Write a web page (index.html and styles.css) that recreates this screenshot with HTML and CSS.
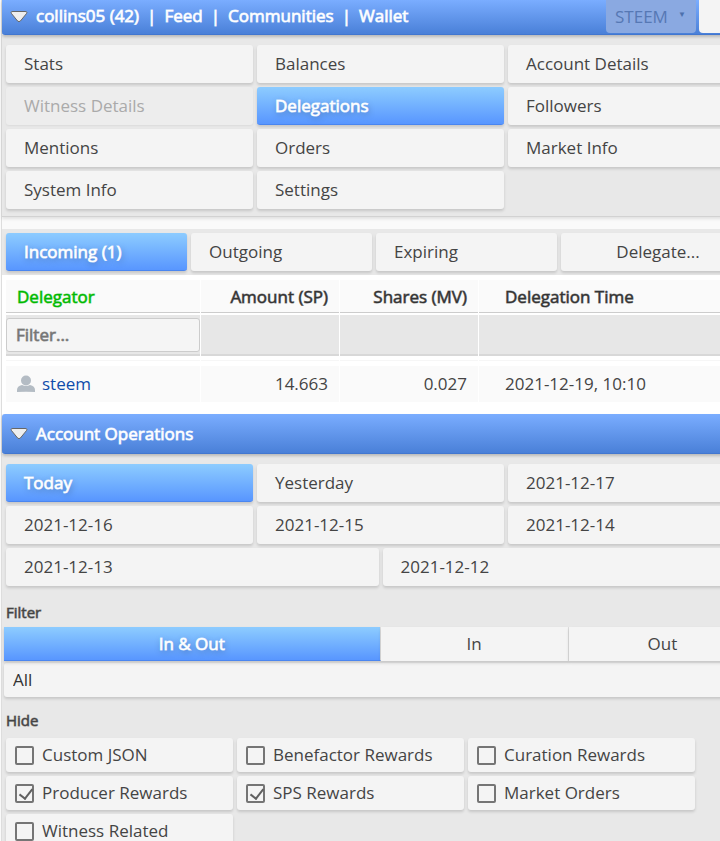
FILE: index.html
```
<!DOCTYPE html>
<html lang="en">
<head>
  <meta charset="UTF-8" />
  <meta name="viewport" content="width=device-width, initial-scale=1.0"/>
  <title>collins05 - Delegations</title>
  <link rel="stylesheet" href="styles.css">
</head>
<body>
  <div class="page">
    <header class="bar bar-top">
      <svg class="arrow" viewBox="0 0 18 13" aria-hidden="true"><path d="M3 1.5h12q3 0 1.4 2.2L10.4 11q-1.4 1.4-2.8 0L1.6 3.7Q0 1.5 3 1.5z"/></svg>
      <nav class="links">
        <a href="#">collins05 (42)</a><span>|</span>
        <a href="#">Feed</a><span>|</span>
        <a href="#">Communities</a><span>|</span>
        <a href="#">Wallet</a>
      </nav>
      <div class="chain">
        <select aria-label="Chain" disabled><option>STEEM</option></select>
        <span class="caret">▼</span>
      </div>
      <input class="search" type="text" aria-label="Account">
    </header>

    <div class="panel menu">
      <div class="grid">
        <button class="btn">Stats</button>
        <button class="btn">Balances</button>
        <button class="btn">Account Details</button>
        <button class="btn" disabled>Witness Details</button>
        <button class="btn active">Delegations</button>
        <button class="btn">Followers</button>
        <button class="btn">Mentions</button>
        <button class="btn">Orders</button>
        <button class="btn">Market Info</button>
        <button class="btn">System Info</button>
        <button class="btn">Settings</button>
      </div>
    </div>

    <div class="panel tabs">
      <button class="btn active">Incoming (1)</button>
      <button class="btn">Outgoing</button>
      <button class="btn">Expiring</button>
      <button class="btn center">Delegate...</button>
    </div>

    <div class="table-wrap">
      <table>
        <colgroup><col class="c-name"><col class="c-num"><col class="c-num"><col></colgroup>
        <thead>
          <tr>
            <th class="sorted">Delegator</th>
            <th class="num">Amount (SP)</th>
            <th class="num">Shares (MV)</th>
            <th class="time">Delegation Time</th>
          </tr>
          <tr class="filters">
            <td><input type="text" placeholder="Filter..." aria-label="Filter delegator"></td>
            <td></td>
            <td></td>
            <td></td>
          </tr>
        </thead>
        <tbody>
          <tr>
            <td>
              <a class="user" href="#">
                <svg viewBox="0 0 18 18" aria-hidden="true"><circle cx="9" cy="5.5" r="5"/><path d="M0 17v-2q0-4 5-5q4 2 8 0q5 1 5 5v2q-9-.6-18 0z"/></svg>
                steem
              </a>
            </td>
            <td class="num">14.663</td>
            <td class="num">0.027</td>
            <td class="time">2021-12-19, 10:10</td>
          </tr>
        </tbody>
      </table>
    </div>

    <header class="bar">
      <svg class="arrow" viewBox="0 0 18 13" aria-hidden="true"><path d="M3 1.5h12q3 0 1.4 2.2L10.4 11q-1.4 1.4-2.8 0L1.6 3.7Q0 1.5 3 1.5z"/></svg>
      <h2>Account Operations</h2>
    </header>

    <div class="panel operations">
      <div class="grid days">
        <button class="btn active">Today</button>
        <button class="btn">Yesterday</button>
        <button class="btn">2021-12-17</button>
        <button class="btn">2021-12-16</button>
        <button class="btn">2021-12-15</button>
        <button class="btn">2021-12-14</button>
        <button class="btn half">2021-12-13</button>
        <button class="btn half">2021-12-12</button>
      </div>

      <h3>Filter</h3>
      <div class="segments">
        <button class="btn active">In &amp; Out</button>
        <button class="btn">In</button>
        <button class="btn">Out</button>
      </div>
      <select class="type" aria-label="Operation type"><option>All</option></select>

      <h3 class="hide-title">Hide</h3>
      <div class="checks">
        <label><input type="checkbox">Custom JSON</label>
        <label><input type="checkbox">Benefactor Rewards</label>
        <label><input type="checkbox">Curation Rewards</label>
        <label><input type="checkbox" checked>Producer Rewards</label>
        <label><input type="checkbox" checked>SPS Rewards</label>
        <label><input type="checkbox">Market Orders</label>
        <label><input type="checkbox">Witness Related</label>
      </div>
    </div>
  </div>
</body>
</html>
```
FILE: styles.css
```
* {
  box-sizing: border-box;
}
html, body {
  overflow-x: clip;
}
body {
  margin: 0;
  background: #fafafa;
  color: #444;
  font-family: "Open Sans", sans-serif;
  font-size: 17px;
  line-height: 24px;
}
button, input, select {
  font: inherit;
  color: inherit;
  margin: 0;
  border: none;
}
.page {
  width: calc(100% + 38px);
  margin-left: 1px;
  border-left: 1px solid #ddd;
}

/* blue title bars */
.bar {
  position: relative;
  display: flex;
  align-items: center;
  height: 40px;
  padding-left: 8px;
  border-bottom: 1px solid #4277d0;
  border-radius: 3px;
  background: linear-gradient(#7aadff, #4a80d8);
  box-shadow: 0 2px 3px rgba(0, 0, 0, 0.2);
  color: #fff;
  -webkit-text-stroke: 1px rgba(255, 255, 255, 0.75);
}
.bar-top {
  height: 35px;
  border-radius: 0 0 3px 3px;
  padding-bottom: 2px;
}
.bar h2 {
  margin: 0;
  font-size: 17px;
  font-weight: 400;
}
.arrow {
  width: 18px;
  height: 13px;
  margin-right: 8px;
  fill: #eee;
  stroke: #666;
}
.links {
  display: flex;
  flex: 1;
  gap: 8px;
}
.links a {
  color: #fff;
  text-decoration: none;
}
.chain {
  position: relative;
  align-self: flex-start;
  width: 90px;
  color: #4c70ad;
  -webkit-text-stroke: 0;
}
.chain select {
  appearance: none;
  width: 100%;
  height: 33px;
  padding: 0 9px;
  border-radius: 0 0 4px 4px;
  background: #8aa9e1;
  color: #5678b4;
  opacity: 1;
}
.caret {
  position: absolute;
  top: 2px;
  right: 10px;
  font-size: 8px;
}
.search {
  align-self: flex-start;
  width: 57px;
  height: 33px;
  margin: 0 3px;
  border-radius: 0 0 4px 4px;
  background: #f4f4f4;
}

.panel {
  background: #e8e8e8;
}
.menu {
  padding: 10px 4px 7px;
  border-bottom: 1px solid #d2d2d2;
  box-shadow: 0 2px 3px rgba(0, 0, 0, 0.1);
}
.grid {
  display: grid;
  grid-template-columns: repeat(6, 1fr);
  gap: 4px;
}
.btn {
  height: 38px;
  padding: 0 18px;
  border-radius: 3px;
  background: #f4f4f4;
  box-shadow: 0 2px 3px rgba(0, 0, 0, 0.15);
  text-align: left;
}
.grid .btn {
  grid-column: span 2;
}
.grid .half {
  grid-column: span 3;
}
.btn:disabled {
  background: #ededed;
  box-shadow: 0 1px 2px rgba(0, 0, 0, 0.06);
  color: #aaa;
}
.btn.active {
  border-bottom: 1px solid #4a86f0;
  background: linear-gradient(#8dccff, #5896ff);
  color: #fff;
  -webkit-text-stroke: 1px rgba(255, 255, 255, 0.75);
  text-shadow: 1px 2px 6px rgba(0, 0, 0, 0.35);
}
.tabs {
  display: grid;
  grid-template-columns: 181px 181px 181px 1fr;
  gap: 4px;
  margin-top: 12px;
  padding: 4px;
}
.btn.center {
  text-align: center;
}

/* delegations table */
.table-wrap {
  padding: 3px 3px 10px;
  background: #fff;
}
table {
  width: 100%;
  table-layout: fixed;
  border-collapse: separate;
  border-spacing: 1px 2px;
}
.c-name {
  width: 194px;
}
.c-num {
  width: 138px;
}
th {
  height: 33px;
  padding: 2px 11px 0;
  border-bottom: 1px solid #ccc;
  background: #fafafa;
  color: #333;
  font-weight: 400;
  text-align: left;
  -webkit-text-stroke: 1px rgba(51, 51, 51, 0.6);
}
th.sorted {
  color: #00b900;
  -webkit-text-stroke: 1px rgba(0, 185, 0, 0.6);
}
td {
  padding: 0;
}
.filters td {
  height: 41px;
  border-bottom: 2px solid #d8d8d8;
  background: #e7e7e7;
}
.filters input {
  display: block;
  width: 100%;
  height: 34px;
  padding: 0 9px;
  border: 1px solid #ccc;
  border-radius: 3px;
  background: #f5f5f5;
}
.filters input::placeholder {
  color: #757575;
  -webkit-text-stroke: 1px rgba(117, 117, 117, 0.7);
}
tbody td {
  height: 44px;
  padding: 8px 11px 0;
  background: linear-gradient(#fff 2px, #f6f6f6 2px 3px, #fff 3px 8px, #fafafa 8px);
}
table .num {
  text-align: right;
}
table .time {
  padding-left: 26px;
}
.user {
  display: flex;
  align-items: center;
  gap: 7px;
  color: #0f4cab;
  text-decoration: none;
}
.user svg {
  width: 18px;
  height: 18px;
  fill: #b4bcc4;
}

.operations {
  padding: 10px 2px 12px;
}
.days {
  padding: 0 2px;
}
h3 {
  margin: 14px 2px 3px;
  font-size: 15px;
  font-weight: 400;
  -webkit-text-stroke: 1px rgba(68, 68, 68, 0.6);
}
.hide-title {
  margin: 11px 2px 6px;
}
.segments {
  display: grid;
  grid-template-columns: 2fr 1fr 1fr;
}
.segments .btn {
  height: 34px;
  padding: 0;
  border-radius: 0;
  border-right: 1px solid #ddd;
  text-align: center;
}
.type {
  appearance: none;
  display: block;
  width: 100%;
  height: 34px;
  margin-top: 2px;
  padding: 0 9px;
  border-radius: 3px;
  background: #f4f4f4;
  box-shadow: 0 2px 3px rgba(0, 0, 0, 0.15);
  color: #333;
}

/* hide options */
.checks {
  display: flex;
  flex-wrap: wrap;
  gap: 4px;
  padding: 0 2px;
}
.checks label {
  display: flex;
  align-items: center;
  gap: 8px;
  width: 227px;
  height: 34px;
  padding: 0 9px;
  border-radius: 3px;
  background: #f4f4f4;
  box-shadow: 0 2px 3px rgba(0, 0, 0, 0.15);
}
.checks input {
  appearance: none;
  width: 19px;
  height: 19px;
  border: 2px solid #757575;
  border-radius: 2px;
}
.checks input:checked::after {
  content: "";
  display: block;
  width: 6px;
  height: 11px;
  margin-left: 5px;
  border: solid #606060;
  border-width: 0 2px 2px 0;
  transform: rotate(38deg);
}
```
